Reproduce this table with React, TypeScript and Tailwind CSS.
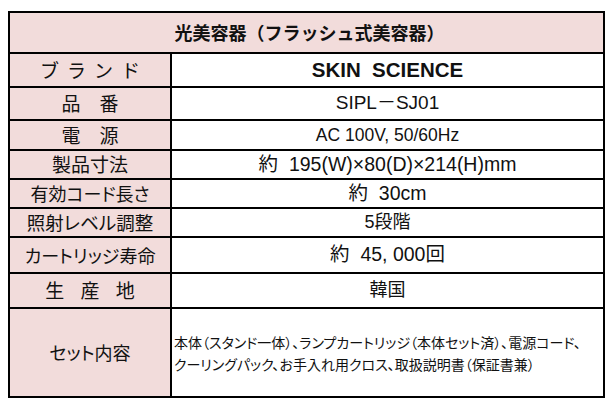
import React from "react";

type RowProps = {
  label: React.ReactNode;
  value: React.ReactNode;
  h: string;
  labelClass?: string;
  valueClass?: string;
};

// one line of the spec sheet: pink label cell + white value cell
const SpecRow = ({ label, value, h, labelClass = "", valueClass = "" }: RowProps) => (
  <div className={`flex border-t-2 border-black ${h}`}>
    <div
      className={`w-[162px] shrink-0 border-r-2 border-black bg-[#f2dcdb] flex items-center justify-center font-['Noto_Sans_CJK_JP',sans-serif] font-normal text-[#111] whitespace-pre ${labelClass}`}
    >
      {label}
    </div>
    <div
      className={`flex-1 flex items-center bg-white font-['Liberation_Sans','Noto_Sans_CJK_JP',sans-serif] text-[#111] ${valueClass}`}
    >
      {value}
    </div>
  </div>
);

const App = () => {
  return (
    <div className="w-[614px] h-[408px] bg-white pt-[11px] pl-[8px]">
      <div className="w-[597px] border-2 border-black">
        <div className="h-[39px] bg-[#f2dcdb] flex items-center justify-center pl-[6px] font-['Noto_Sans_CJK_JP',sans-serif] font-bold text-[18px] text-[#111]">
          光美容器（フラッシュ式美容器）
        </div>

        <SpecRow
          h="h-[34px]"
          label="ブランド"
          labelClass="text-[19px] tracking-[8px] pl-[8px]"
          value="SKIN  SCIENCE"
          valueClass="justify-center font-bold text-[20.5px] whitespace-pre"
        />
        <SpecRow
          h="h-[33px]"
          label="品　番"
          labelClass="text-[19px]"
          value="SIPL－SJ01"
          valueClass="justify-center text-[19px]"
        />
        <SpecRow
          h="h-[30px]"
          label="電　源"
          labelClass="text-[19px]"
          value="AC 100V, 50/60Hz"
          valueClass="justify-center text-[17.5px]"
        />
        <SpecRow
          h="h-[29px]"
          label="製品寸法"
          labelClass="text-[19px] [font-feature-settings:'palt']"
          value="約  195(W)×80(D)×214(H)mm"
          valueClass="justify-center text-[19.5px] whitespace-pre"
        />
        <SpecRow
          h="h-[29px]"
          label="有効コード長さ"
          labelClass="text-[18px] [font-feature-settings:'palt']"
          value="約  30cm"
          valueClass="justify-center text-[19.5px] whitespace-pre"
        />
        <SpecRow
          h="h-[29px]"
          label="照射レベル調整"
          labelClass="text-[18.5px] [font-feature-settings:'palt']"
          value="5段階"
          valueClass="justify-center text-[18px]"
        />
        <SpecRow
          h="h-[36px]"
          label="カートリッジ寿命"
          labelClass="text-[18px] [font-feature-settings:'palt']"
          value="約  45, 000回"
          valueClass="justify-center text-[19.5px] whitespace-pre"
        />
        <SpecRow
          h="h-[35px]"
          label="生 産 地"
          labelClass="text-[19px] tracking-[6px] pl-[6px]"
          value="韓国"
          valueClass="justify-center text-[18px]"
        />
        <SpecRow
          h="h-[89px]"
          label="セット内容"
          labelClass="text-[18px] [font-feature-settings:'palt']"
          value={
            <div className="pl-[2px] text-[14px] leading-[22px] whitespace-nowrap font-['Noto_Sans_CJK_JP',sans-serif] [font-feature-settings:'palt']">
              <div>本体（スタンド一体）、ランプカートリッジ（本体セット済）、電源コード、</div>
              <div>クーリングパック、お手入れ用クロス、取扱説明書（保証書兼）</div>
            </div>
          }
        />
      </div>
    </div>
  );
};

export default App;
